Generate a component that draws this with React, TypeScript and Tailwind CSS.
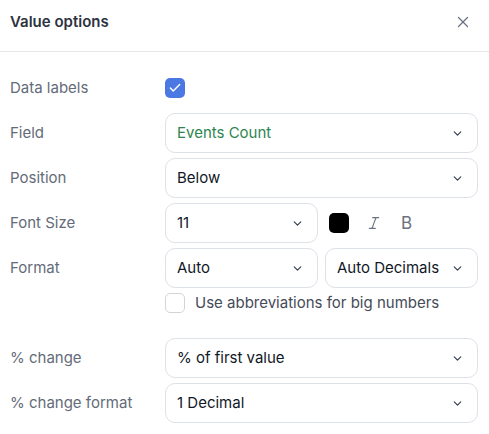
import { ChevronDown, X, Check, Italic } from "lucide-react";

function Select({ value, className = "", valueClass = "text-[#111827]" }: { value: string; className?: string; valueClass?: string }) {
  return (
    <div
      className={`flex h-[40px] items-center justify-between rounded-[10px] border border-[#dde1e8] bg-white pl-[11px] pr-[13px] ${className}`}
    >
      <span className={`text-[15px] ${valueClass}`}>{value}</span>
      <ChevronDown className="h-[13px] w-[13px] text-[#374151]" strokeWidth={2.25} />
    </div>
  );
}

function Row({ label, children }: { label: string; children: React.ReactNode }) {
  return (
    <div className="flex h-[40px] items-center">
      <div className="w-[155px] shrink-0 text-[15px] text-[#646b78]">{label}</div>
      <div className="flex flex-1 items-center">{children}</div>
    </div>
  );
}

export default function App() {
  return (
    <div
      className="h-[434px] w-[489px] bg-white"
      style={{ fontFamily: "Inter, 'Noto Sans', sans-serif" }}
    >
      {/* header */}
      <div className="flex h-[52px] items-start justify-between border-b border-[#e5e7eb] pl-[10px] pr-[17px] pt-[12px]">
        <h2 className="text-[15px] font-semibold leading-[20px] text-[#2d3340]">Value options</h2>
        <X className="mt-[1px] h-[18px] w-[18px] text-[#6b7280]" strokeWidth={1.75} />
      </div>

      {/* body */}
      <div className="flex flex-col gap-[5px] pl-[10px] pr-[11px] pt-[16px]">
        <Row label="Data labels">
          <div className="flex h-[20px] w-[20px] items-center justify-center rounded-[5px] bg-[#4b78e2]">
            <Check className="h-[14px] w-[14px] text-white" strokeWidth={2.5} />
          </div>
        </Row>
        <Row label="Field">
          <Select value="Events Count" className="flex-1" valueClass="text-[#2e8550]" />
        </Row>
        <Row label="Position">
          <Select value="Below" className="flex-1" />
        </Row>
        <Row label="Font Size">
          <Select value="11" className="w-[153px]" />
          <div className="ml-[11px] h-[20px] w-[20px] rounded-[5px] bg-black" />
          <Italic className="ml-[17px] h-[16px] w-[16px] text-[#6b7280]" strokeWidth={1.75} />
          <span className="ml-[19px] text-[17px] leading-none text-[#6b7280]">B</span>
        </Row>
        <Row label="Format">
          <div className="flex flex-1 gap-[7px]">
            <Select value="Auto" className="flex-1" />
            <Select value="Auto Decimals" className="flex-1" />
          </div>
        </Row>
        <div className="flex h-[20px] items-center pl-[155px]">
          <div className="h-[20px] w-[20px] rounded-[5px] border border-[#d1d5db] bg-white" />
          <span className="ml-[10px] text-[15px] text-[#454b57]">Use abbreviations for big numbers</span>
        </div>
        <div className="mt-[20px] flex flex-col gap-[5px]">
          <Row label="% change">
            <Select value="% of first value" className="flex-1" />
          </Row>
          <Row label="% change format">
            <Select value="1 Decimal" className="flex-1" />
          </Row>
        </div>
      </div>
    </div>
  );
}
